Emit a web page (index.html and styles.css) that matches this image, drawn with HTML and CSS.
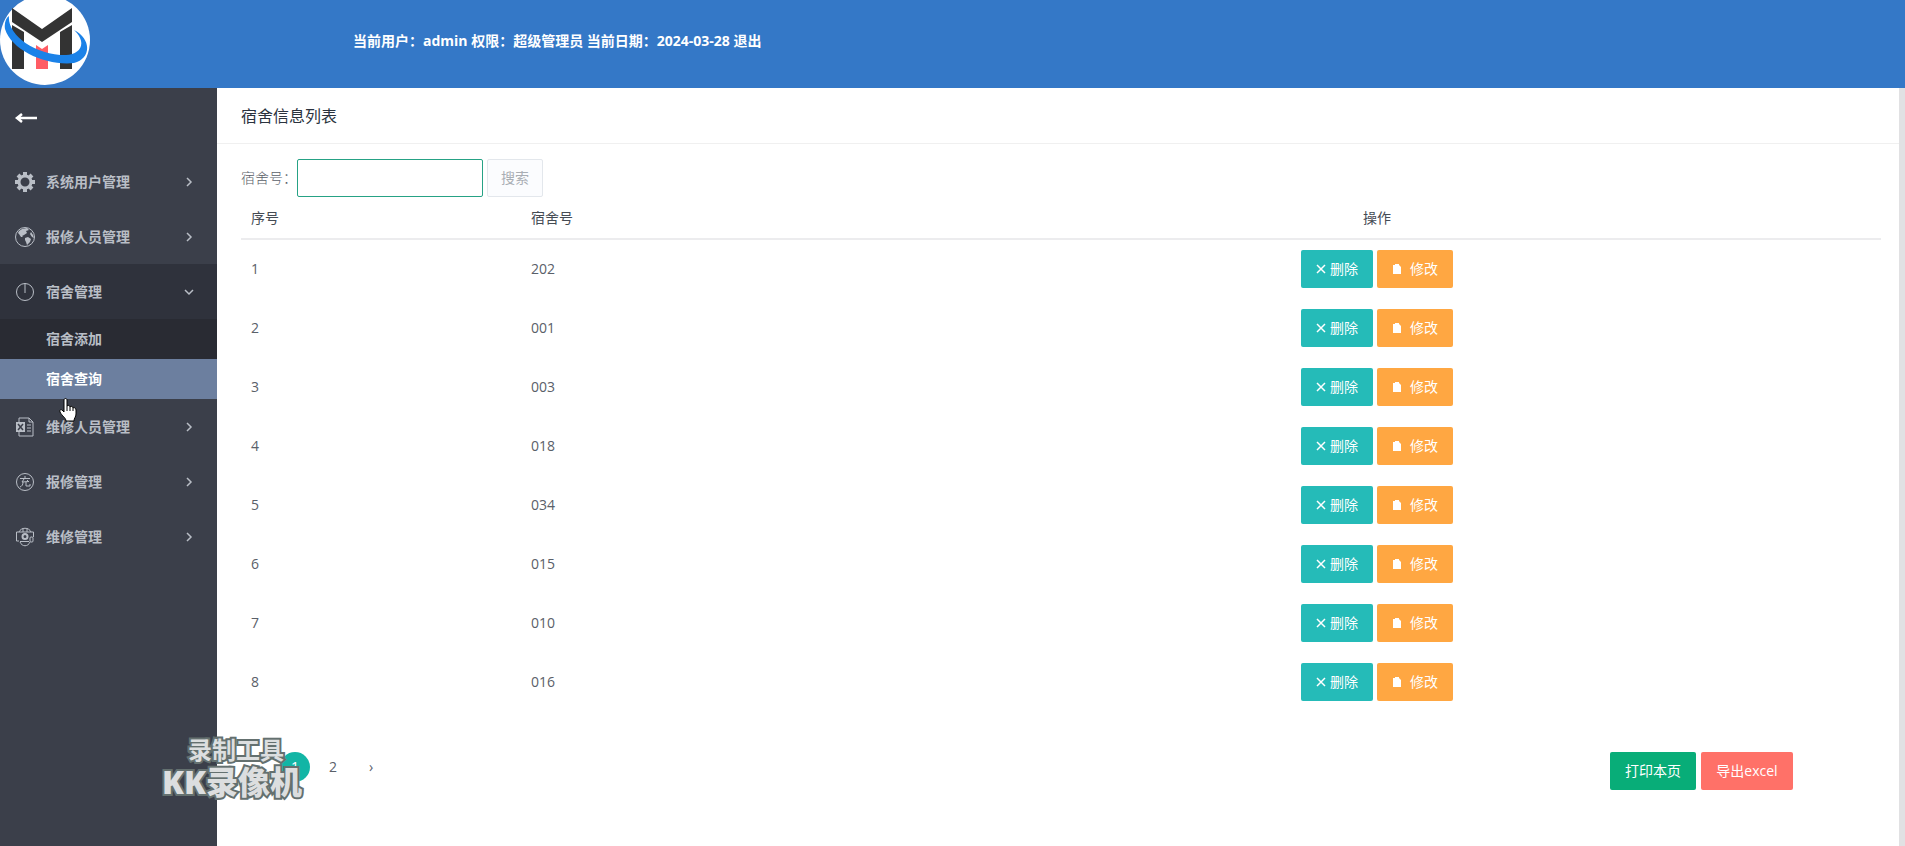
FILE: index.html
```html
<!DOCTYPE html>
<html lang="zh">
<head>
  <meta charset="UTF-8">
  <title>宿舍信息列表</title>
  <meta name="viewport" content="width=device-width, initial-scale=1.0">
  <link rel="stylesheet" href="styles.css">
</head>
<body>
  <header class="header">
    <svg class="logo" viewBox="0 0 90 90" aria-hidden="true">
      <circle cx="45" cy="45" r="45" fill="#fff"/>
      <path fill="#333" d="M12 13l30 21 30-21v14L42 47 12 27zM12 30l12 7v37H12zM60 37l12-7v44H60z"/>
      <path fill="#ff5c64" d="M36 50l6 4 6-4v24H36z"/>
      <path fill="#1b82e8" d="M9 21C7 39 34 60 66 60C80 60 88 48 74 35C92 44 91 64 74 68C47 71 12 56 5 34C4 28 6 23 9 21z"/>
    </svg>
    <p class="user-info">当前用户：admin 权限：超级管理员 当前日期：2024-03-28 <a href="#">退出</a></p>
  </header>

  <div class="wrapper">
    <aside class="sidebar">
      <button class="toggle" type="button" aria-label="收起">
        <svg width="24" height="14" viewBox="0 0 24 14"><path d="M23 7H3M8 3L3 7l5 4" fill="none" stroke="#fff" stroke-width="2.500"/></svg>
      </button>
      <nav>
        <a class="menu-item" href="#">
          <svg class="icon" viewBox="0 0 20 20"><circle cx="10" cy="10" r="6" fill="none" stroke="currentColor" stroke-width="3"/><path d="M10 0v4M10 16v4M0 10h4M16 10h4M3 3l3 3M14 14l3 3M3 17l3-3M14 6l3-3" stroke="currentColor" stroke-width="4"/></svg>
          <span>系统用户管理</span>
          <svg class="arrow" viewBox="0 0 10 10"><path d="M3 1l4 4-4 4"/></svg>
        </a>
        <a class="menu-item" href="#">
          <svg class="icon" viewBox="0 0 20 20"><circle cx="10" cy="10" r="9.500" fill="none" stroke="currentColor"/><path fill="currentColor" d="M4 4l3-2 5-1 2 2-3 1 1 2-3 2-2 1 1 1-2 0-2-3-1-1zM10 11l3-1 3 2-1 3-3 3-1-3-1-2zM16 5l2 3 1 3-2-1-2-3z"/></svg>
          <span>报修人员管理</span>
          <svg class="arrow" viewBox="0 0 10 10"><path d="M3 1l4 4-4 4"/></svg>
        </a>
        <a class="menu-item open" href="#">
          <svg class="icon" viewBox="0 0 20 20"><circle cx="10" cy="10" r="8.500" fill="none" stroke="currentColor"/><path d="M10 1v10" stroke="currentColor"/></svg>
          <span>宿舍管理</span>
          <svg class="arrow" viewBox="0 0 10 10"><path d="M1 3l4 4 4-4"/></svg>
        </a>
        <div class="submenu">
          <a href="#">宿舍添加</a>
          <a class="active" href="#">宿舍查询</a>
        </div>
        <a class="menu-item" href="#">
          <svg class="icon" viewBox="0 0 20 20"><path d="M4 5V1h10l4 4v14H4v-4M14 1v4h4M12 8h4M12 11h4M12 14h4" fill="none" stroke="currentColor"/><path d="M1 5h9v10H1z" fill="currentColor"/><path d="M3 7l5 6M8 7l-5 6" stroke="#3b3f4a" stroke-width="1.500"/></svg>
          <span>维修人员管理</span>
          <svg class="arrow" viewBox="0 0 10 10"><path d="M3 1l4 4-4 4"/></svg>
        </a>
        <a class="menu-item" href="#">
          <svg class="icon" viewBox="0 0 20 20"><g fill="none" stroke="currentColor"><circle cx="10" cy="10" r="8.500"/><path d="M10 4v2M5 6.500h10M9 7l-2 3 7-.5M12 8l2 2M8 10c0 3-1 4-3 5M11 10v4h4v-2"/></g></svg>
          <span>报修管理</span>
          <svg class="arrow" viewBox="0 0 10 10"><path d="M3 1l4 4-4 4"/></svg>
        </a>
        <a class="menu-item" href="#">
          <svg class="icon" viewBox="0 0 20 20"><g fill="none" stroke="currentColor"><path d="M4 5c2-5 10-5 12 0M8 1v4M12 1v4M4 14H1.500V5h17v5M5 15c2 5 8 5 10 0M5 14.500h9"/><circle cx="10" cy="9.500" r="2.500" stroke-width="2"/><rect x="15" y="10" width="3" height="5" rx="1"/></g></svg>
          <span>维修管理</span>
          <svg class="arrow" viewBox="0 0 10 10"><path d="M3 1l4 4-4 4"/></svg>
        </a>
      </nav>
    </aside>

    <main class="content">
      <h1 class="title">宿舍信息列表</h1>
      <div class="card-body">
        <form class="search">
          <label for="room">宿舍号：</label>
          <input type="text" id="room">
          <button class="btn btn-search" type="button">搜索</button>
        </form>
        <table class="table">
          <thead>
            <tr><th class="col-no">序号</th><th class="col-room">宿舍号</th><th class="col-action">操作</th></tr>
          </thead>
          <tbody id="rows"></tbody>
        </table>
        <div class="footer">
          <div class="pages">
            <a class="current" href="#">1</a>
            <a href="#">2</a>
            <a class="next" href="#">›</a>
          </div>
          <div class="tools">
            <button class="btn btn-print" type="button">打印本页</button>
            <button class="btn btn-excel" type="button">导出excel</button>
          </div>
        </div>
      </div>
    </main>
  </div>

  <div class="watermark"><span>录制工具</span><strong>KK录像机</strong></div>
  <svg class="cursor" viewBox="0 0 18 24" aria-hidden="true"><path d="M5 2c0-2 3-2 3 0v6c1-1 3-1 3 1 1-1 3-1 3 1 1-1 3 0 3 2v4c0 3-2 4-2 7H7c0-3-4-5-6-9-1-2 1-3 2-2l2 2z" fill="#fff" stroke="#000"/><path d="M8 8v5M11 9v4M14 10v3" stroke="#000"/></svg>

  <script>
    const rooms = ["202", "001", "003", "018", "034", "015", "010", "016"];
    const rows = document.getElementById('rows');

    rooms.forEach(function(room, i) {
      rows.innerHTML += `<tr>
        <td>${i + 1}</td>
        <td>${room}</td>
        <td class="col-action">
          <div class="actions">
            <button class="btn btn-delete" type="button"><svg width="10" height="10" viewBox="0 0 10 10"><path d="M1 1l8 8M9 1L1 9" stroke="#fff" stroke-width="1.500"/></svg>删除</button>
            <button class="btn btn-edit" type="button"><svg width="10" height="12" viewBox="0 0 10 12"><path d="M1 2h2V1h4v1l2 2v7H1z" fill="#fff"/></svg>修改</button>
          </div>
        </td>
      </tr>`;
    });
  </script>
</body>
</html>
```
FILE: styles.css
```css
* { box-sizing: border-box; }
body {
  margin: 0;
  min-height: 100vh;
  display: flex;
  flex-direction: column;
  font-family: "Open Sans", "Noto Sans CJK SC", sans-serif;
  font-size: 14px;
  line-height: 20px;
  color: #5a6069;
  background: #fff;
}
a { color: inherit; text-decoration: none; }
button, input { font: inherit; }

/* header */
.header { display: flex; height: 88px; background: #3478c7; color: #fff; overflow: hidden; }
.logo { width: 90px; height: 90px; margin-top: -5px; }
.user-info { margin: 31px 0 0 263px; font-weight: bold; }

.wrapper { flex: 1; display: flex; }

/* sidebar */
.sidebar { width: 217px; flex-shrink: 0; background: #3b3f4a; color: #b9bec6; font-weight: bold; }
.toggle { display: flex; align-items: center; width: 100%; height: 66px; padding: 0 14px 6px; border: none; background: none; cursor: pointer; }
.menu-item { display: flex; align-items: center; height: 55px; padding: 0 23px 0 15px; }
.menu-item span { flex: 1; }
.icon { width: 20px; height: 20px; margin-right: 11px; }
.arrow { width: 10px; height: 10px; fill: none; stroke: currentColor; stroke-width: 1.5; overflow: visible; }
.open { background: #2f323c; }
.submenu { background: #292b33; }
.submenu a { display: block; padding: 10px 0 10px 46px; }
.submenu .active { background: #6c7f9f; color: #fff; }

/* content */
.content { flex: 1; border-right: 6px solid #e1e1e3; }
.title { margin: 0; padding: 18px 24px 17px; border-bottom: 1px solid #f0f0f0; font-size: 16px; line-height: 20px; font-weight: normal; color: #2b333e; }
.card-body { padding: 15px 18px 0 24px; }
.search { display: flex; align-items: center; }
.search label { width: 56px; font-weight: 300; }
.search input { width: 186px; height: 38px; margin-right: 4px; padding: 0 10px; border: 1px solid #26a285; border-radius: 2px; outline: none; }
.btn { display: inline-flex; align-items: center; justify-content: center; gap: 4px; height: 38px; padding: 0 13px; border: none; border-radius: 2px; color: #fff; cursor: pointer; }
.btn-search { border: 1px solid #e3e7ec; background: #fbfcfe; color: #a9aeb4; }

.table { width: 100%; table-layout: fixed; border-collapse: collapse; }
.table th { height: 42px; padding: 0 10px; border-bottom: 2px solid #ececee; text-align: left; font-weight: normal; color: #454b54; }
.table td { height: 59px; padding: 0 10px; }
.col-no { width: 280px; }
.col-room { width: 352px; }
.table .col-action { text-align: center; }
.actions { display: flex; justify-content: center; gap: 4px; }
.btn-delete { width: 72px; background: #25bbb8; }
.btn-edit { width: 76px; gap: 8px; background: #ffa742; }

.footer { display: flex; justify-content: space-between; margin-top: 41px; padding-right: 88px; }
.pages { display: flex; height: 30px; margin-left: 39px; }
.pages a { width: 30px; margin-right: 8px; line-height: 30px; text-align: center; border-radius: 50%; }
.pages .current { background: #12b5a5; color: #fff; }
.tools { display: flex; gap: 5px; }
.btn-print { width: 86px; background: #08ad78; }
.btn-excel { width: 92px; background: #ff7168; }

/* recorder overlay and pointer */
.watermark {
  position: absolute;
  left: 162px;
  top: 734px;
  display: flex;
  flex-direction: column;
  align-items: flex-end;
  color: #dcdedf;
  font-weight: bold;
  -webkit-text-stroke: 4px #64706f;
  paint-order: stroke fill;
}
.watermark span { margin-right: 18px; font-size: 24px; line-height: 32px; }
.watermark strong { font-size: 32px; line-height: 32px; }
.cursor { position: absolute; left: 59px; top: 398px; width: 18px; height: 24px; }
```
